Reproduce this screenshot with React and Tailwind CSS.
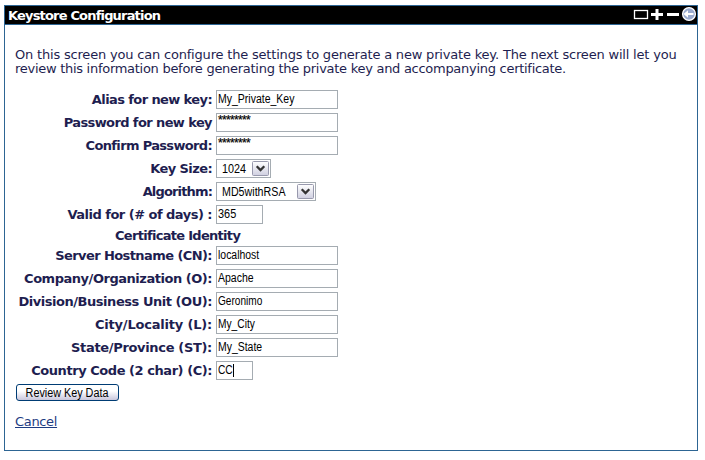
const inputBase = "h-[19px] border border-[#a5acb2] bg-white pl-px font-['Liberation_Sans',sans-serif] text-[12px] leading-[15px] text-black whitespace-nowrap";

function Row({ label, track, children }) {
  return (
    <div className="flex h-[23px] items-start">
      <div className={`w-[198px] shrink-0 pr-px text-right font-bold leading-[19px] whitespace-nowrap ${track}`}>{label}</div>
      <div className="ml-[3px]">{children}</div>
    </div>
  );
}

function Field({ value, width = "w-[122px]", scale = "scale-x-[0.875]", caret }) {
  return (
    <div className={`${inputBase} ${width} flex`}>
      <span className={`origin-left leading-[17px] ${scale}`}>{value}</span>
      {caret && <span className="-ml-[2px] mt-[2px] h-[13px] w-px bg-black" />}
    </div>
  );
}

function Password() {
  return (
    <div className={`${inputBase} w-[122px] tracking-[-0.67px]`}>
      <span className="block leading-[13px] [-webkit-text-stroke:0.2px_black]">********</span>
    </div>
  );
}

function Select({ value, width, scale }) {
  return (
    <div className={`flex h-[19px] items-center justify-between border border-[#a5acb2] bg-white pl-[5px] pr-px font-['Liberation_Sans',sans-serif] text-[12px] text-black ${width}`}>
      <span className={`origin-left pt-px leading-[17px] ${scale}`}>{value}</span>
      <svg className="-ml-3 shrink-0" width="17" height="15" viewBox="0 0 17 15">
        <defs>
          <linearGradient id="arrowFace" x1="0" y1="0" x2="0" y2="1">
            <stop offset="0" stopColor="#fff" />
            <stop offset="1" stopColor="#cfcfe0" />
          </linearGradient>
        </defs>
        <rect x="0.5" y="0.5" width="16" height="14" rx="1" fill="url(#arrowFace)" stroke="#9899ad" />
        <path d="M4.7 5.2L8.5 9L12.3 5.2" fill="none" stroke="#333" strokeWidth="2.3" />
      </svg>
    </div>
  );
}

function WindowIcons() {
  return (
    <svg className="shrink-0" width="64" height="18" viewBox="633 6 64 18">
      <rect x="634.5" y="10.5" width="13" height="8" fill="none" stroke="#fff" strokeWidth="1.3" />
      <path d="M651 14.5H663M657 9V20" stroke="#fff" strokeWidth="3" />
      <path d="M667 14.5H679" stroke="#fff" strokeWidth="3" />
      <circle cx="689" cy="14" r="6.4" fill="#9aabcf" stroke="#fff" strokeWidth="1.3" />
      <path d="M683.5 14L688 10.2V17.8Z" fill="#fff" />
      <path d="M686 14H693.5" stroke="#fff" strokeWidth="2" />
    </svg>
  );
}

export default function App() {
  return (
    <div className="h-[460px] w-[705px] bg-white pl-[4px] pt-[5px] font-['DejaVu_Sans',sans-serif] text-[13px] text-[#1e1e50]">
      <div className="h-[446px] w-[694px] border border-[#2d6593]">
        <div className="flex h-[19px] items-start justify-between border-b border-[#2d6593] bg-black pl-[3px] text-white">
          <span className="text-[13px] font-bold leading-[19px] tracking-[-0.82px] whitespace-nowrap">Keystore Configuration</span>
          <WindowIcons />
        </div>
        <div className="pl-[10px] pt-[23px]">
          <p className="leading-[14px] whitespace-nowrap">
            <span className="block tracking-[-0.19px]">On this screen you can configure the settings to generate a new private key. The next screen will let you</span>
            <span className="block tracking-[-0.28px]">review this information before generating the private key and accompanying certificate.</span>
          </p>
          <div className="pt-[14px]">
            <Row label="Alias for new key:" track="tracking-[-0.6px]"><Field value="My_Private_Key" /></Row>
            <Row label="Password for new key" track="tracking-[-0.6px]"><Password /></Row>
            <Row label="Confirm Password:" track="tracking-[-0.66px]"><Password /></Row>
            <Row label="Key Size:" track="tracking-[-0.58px]"><Select value="1024" width="w-[55px]" scale="scale-x-[0.9]" /></Row>
            <Row label="Algorithm:" track="tracking-[-0.85px]"><Select value="MD5withRSA" width="w-[100px]" scale="scale-x-[0.89]" /></Row>
            <Row label="Valid for (# of days) :" track="tracking-[-0.52px]"><Field value="365" width="w-[47px]" scale="scale-x-[0.91]" /></Row>
            <div className="h-[18px] pl-[100px] font-bold leading-[16px] tracking-[-0.7px]">Certificate Identity</div>
            <Row label="Server Hostname (CN):" track="tracking-[-0.58px]"><Field value="localhost" scale="scale-x-[0.87]" /></Row>
            <Row label="Company/Organization (O):" track="tracking-[-0.47px]"><Field value="Apache" /></Row>
            <Row label="Division/Business Unit (OU):" track="tracking-[-0.46px]"><Field value="Geronimo" scale="scale-x-[0.84]" /></Row>
            <Row label="City/Locality (L):" track="tracking-[-0.2px]"><Field value="My_City" scale="scale-x-[0.85]" /></Row>
            <Row label="State/Province (ST):" track="tracking-[-0.33px]"><Field value="My_State" scale="scale-x-[0.87]" /></Row>
            <Row label="Country Code (2 char) (C):" track="tracking-[-0.45px]"><Field value="CC" width="w-[37px]" scale="scale-x-[0.85]" caret /></Row>
          </div>
          <button className="ml-px flex h-[17px] w-[103px] items-center justify-center rounded-[3px] border border-[#003c74] bg-linear-to-b from-white from-40% to-[#c9c7dc] font-['Liberation_Sans',sans-serif] text-[12px] leading-[15px] text-black whitespace-nowrap">
            <span className="scale-x-[0.9] pt-px">Review Key Data</span>
          </button>
          <a className="mt-[13px] block w-fit leading-[16px] tracking-[-0.33px] text-[#1e3c82] underline" href="#">Cancel</a>
        </div>
      </div>
    </div>
  );
}
